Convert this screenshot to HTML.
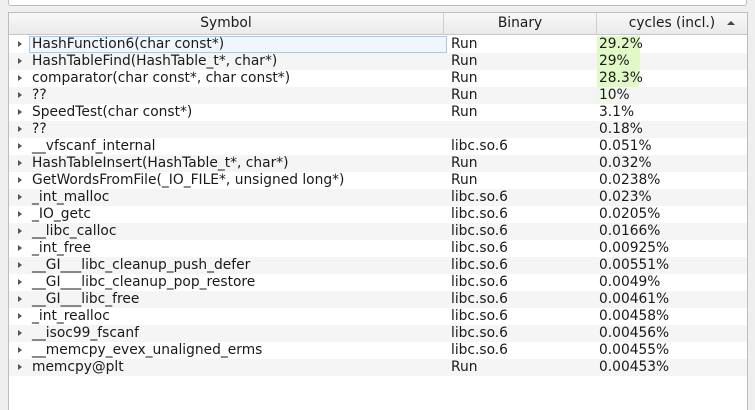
<html style="overflow:hidden"><head><style>
html,body{overflow:hidden}
body{margin:0;width:755px;height:410px;background:#efefef;font-family:"DejaVu Sans","Liberation Sans",sans-serif;font-size:13.8px;color:#1a1a1a;position:relative;overflow:hidden}
.top{position:absolute;left:8px;top:-4px;width:737px;height:8px;border:1px solid #bdbdbd;border-radius:3px;background:#fff}
.frame{position:absolute;left:8px;top:12px;width:738px;height:397px;border:1px solid #bdbdbd;border-bottom:none;background:#fff}
.hdr{position:absolute;left:0;top:0;width:738px;height:21px;background:linear-gradient(#f8f8f8,#eaeaea);border-bottom:1px solid #c6c6c6}
.hdr div{position:absolute;top:0;height:21px;line-height:21px;text-align:center;border-right:1px solid #d0d0d0}
.row{position:absolute;left:0;width:738px;height:17px;line-height:17px}
.row.alt{background:#f5f5f5}
.row span{position:absolute;top:0;white-space:nowrap}
.arr{left:9px;width:0;height:0;border-left:4px solid #555;border-top:3.5px solid transparent;border-bottom:3.5px solid transparent;top:5px!important}
.bar{position:absolute;left:588px;top:0;height:17px;background:#e0f9c6}
.sel{position:absolute;left:20px;top:0;width:416px;height:15px;border:1px solid #a9c7e6;background:#f0f6fd}
</style></head><body>
<div class="top"></div>
<div class="frame">
<div class="hdr"><div style="left:0;width:434px">Symbol</div><div style="left:435px;width:152px">Binary</div><div style="left:588px;width:150px;border:none">cycles (incl.)<span style="position:absolute;right:12px;top:8px;border-left:4px solid transparent;border-right:4px solid transparent;border-bottom:4px solid #444;width:0;height:0"></span></div></div>
<div id="rows"></div>
</div>
<script>
var d=[["HashFunction6(char const*)","Run","29.2%",43],["HashTableFind(HashTable_t*, char*)","Run","29%",43],["comparator(char const*, char const*)","Run","28.3%",42],["??","Run","10%",15],["SpeedTest(char const*)","Run","3.1%",0],["??","","0.18%",0],["__vfscanf_internal","libc.so.6","0.051%",0],["HashTableInsert(HashTable_t*, char*)","Run","0.032%",0],["GetWordsFromFile(_IO_FILE*, unsigned long*)","Run","0.0238%",0],["_int_malloc","libc.so.6","0.023%",0],["_IO_getc","libc.so.6","0.0205%",0],["__libc_calloc","libc.so.6","0.0166%",0],["_int_free","libc.so.6","0.00925%",0],["__GI___libc_cleanup_push_defer","libc.so.6","0.00551%",0],["__GI___libc_cleanup_pop_restore","libc.so.6","0.0049%",0],["__GI___libc_free","libc.so.6","0.00461%",0],["_int_realloc","libc.so.6","0.00458%",0],["__isoc99_fscanf","libc.so.6","0.00456%",0],["__memcpy_evex_unaligned_erms","libc.so.6","0.00455%",0],["memcpy@plt","Run","0.00453%",0]];
var h="";d.forEach(function(r,i){h+='<div class="row'+(i%2?' alt':'')+'" style="top:'+(23+i*17)+'px">'+(i==0?'<div class="sel"></div>':'')+(r[3]?'<div class="bar" style="width:'+r[3]+'px;'+(r[3]<20?'background:#eef8e6':'')+'"></div>':'')+'<span class="arr"></span><span style="left:23px">'+r[0]+'</span><span style="left:442px">'+r[1]+'</span><span style="left:590px">'+r[2]+'</span></div>';});
document.getElementById("rows").innerHTML=h;
</script>
</body></html>
